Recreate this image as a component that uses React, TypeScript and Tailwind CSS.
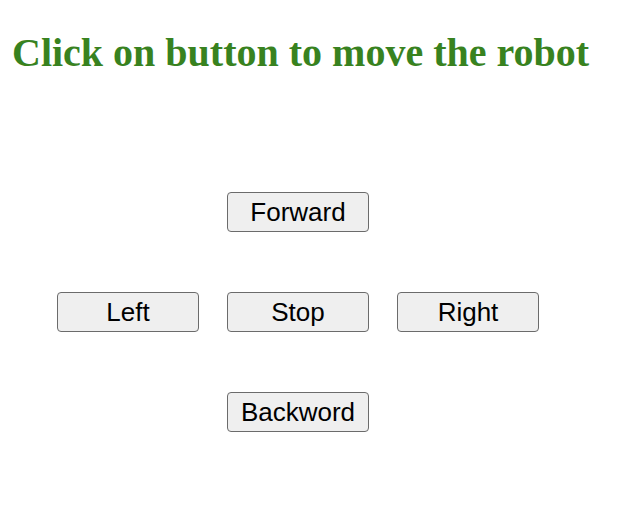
export default function App() {
  const btn =
    "w-[142px] h-[40px] bg-[#efefef] border border-[#6b6b6b] rounded-[4px] text-[26px] leading-none text-black flex items-center justify-center";
  const font = { fontFamily: '"Liberation Sans", Arial, sans-serif' };
  return (
    <div className="w-[644px] h-[515px] bg-white">
      <h1
        className="pl-[12px] pt-[30px] text-[40px] font-bold leading-[46px] text-[#38821f]"
        style={{ fontFamily: '"Liberation Serif", "Times New Roman", serif' }}
      >
        Click on button to move the robot
      </h1>
      <div className="ml-[57px] mt-[116px] grid grid-cols-[142px_142px_142px] gap-x-[28px] gap-y-[60px]" style={font}>
        <div />
        <button className={btn}>Forward</button>
        <div />
        <button className={btn}>Left</button>
        <button className={btn}>Stop</button>
        <button className={btn}>Right</button>
        <div />
        <button className={btn}>Backword</button>
        <div />
      </div>
    </div>
  );
}
